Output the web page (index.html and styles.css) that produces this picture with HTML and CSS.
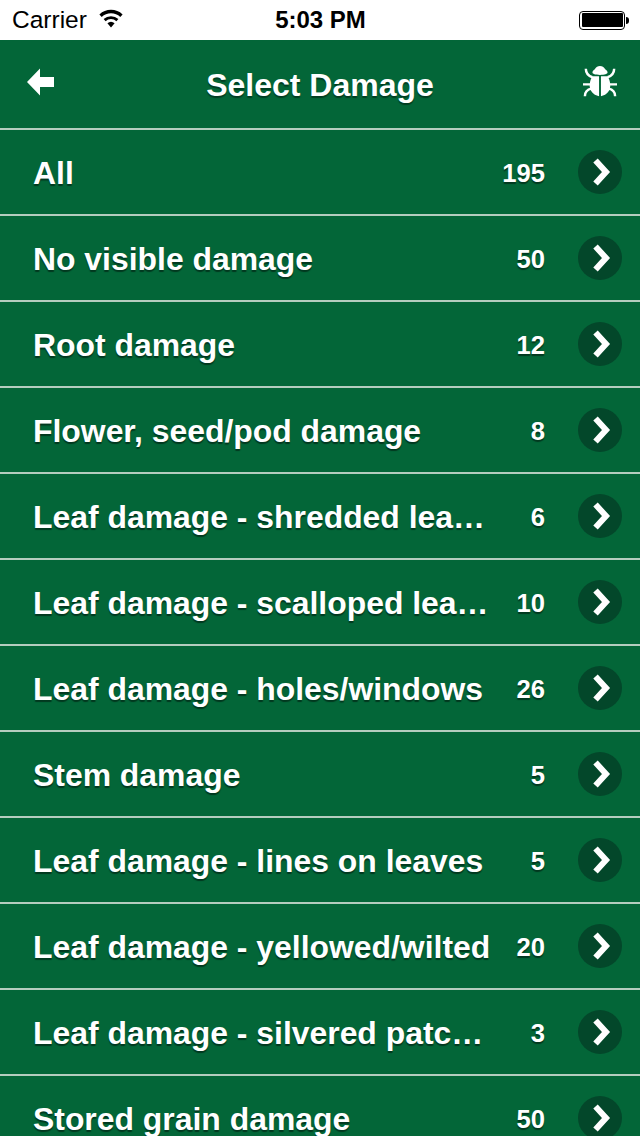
FILE: index.html
```html
<!DOCTYPE html>
<html lang="en">
<head>
<meta charset="utf-8">
<title>Select Damage</title>
<link rel="stylesheet" href="styles.css">
</head>
<body>
<div class="screen">
  <header class="status">
    <div class="status-left">
      <span>Carrier</span>
      <svg class="wifi" width="26" height="20" viewBox="0 0 26 20"><path d="M13 18.500l-3.600-4.200a5.400 5.400 0 0 1 7.200 0zM7.600 12.200L5.600 10a11 11 0 0 1 14.800 0l-2 2.200a8 8 0 0 0-10.800 0zM3.700 7.900L1.400 5.400a17 17 0 0 1 23.200 0l-2.300 2.500a13.800 13.800 0 0 0-18.600 0z" fill="#000"/></svg>
    </div>
    <div class="status-time">5:03 PM</div>
    <div class="status-right">
      <div class="battery"><div class="battery-fill"></div></div>
      <div class="battery-tip"></div>
    </div>
  </header>
  <nav class="navbar">
    <svg class="back" width="30" height="28" viewBox="0 0 30 28"><path d="M1 14L14 0.500V9H28V19H14V27.500z" fill="#fff"/></svg>
    <h1 class="title">Select Damage</h1>
    <svg class="bug" width="36" height="34" viewBox="0 0 38 36" fill="none"><path d="M19 1c2.500 0 4 1 5.500 3.500 1.500.8 2.500 2 2.500 3.500 0 1.300-3 2.500-8 2.500s-8-1.200-8-2.500c0-1.500 1-2.700 2.500-3.500C15 2 16.500 1 19 1z" fill="#fff"/><path d="M11 12h7v21c-4-.5-8-3-9.500-8-.8-3-.5-8.500 2.500-13zM27 12h-7v21c4-.5 8-3 9.500-8 .8-3 .5-8.500-2.500-13z" fill="#fff"/><path d="M4 4c0 5 2.500 7.500 7 9M34 4c0 5-2.500 7.500-7 9M1 20.500h8M37 20.500h-8M3 33c0-4 2-7 7-8M35 33c0-4-2-7-7-8" stroke="#fff" stroke-width="2.600"/></svg>
  </nav>
  <main class="list">
    <div class="row"><span class="label">All</span><span class="count">195</span><span class="go"><svg width="44" height="44" viewBox="0 0 44 44"><path d="M17.500 10.500L28 22 17.500 33.500" fill="none" stroke="#fff" stroke-width="6"/></svg></span></div>
    <div class="row"><span class="label">No visible damage</span><span class="count">50</span><span class="go"><svg width="44" height="44" viewBox="0 0 44 44"><path d="M17.500 10.500L28 22 17.500 33.500" fill="none" stroke="#fff" stroke-width="6"/></svg></span></div>
    <div class="row"><span class="label">Root damage</span><span class="count">12</span><span class="go"><svg width="44" height="44" viewBox="0 0 44 44"><path d="M17.500 10.500L28 22 17.500 33.500" fill="none" stroke="#fff" stroke-width="6"/></svg></span></div>
    <div class="row"><span class="label">Flower, seed/pod damage</span><span class="count">8</span><span class="go"><svg width="44" height="44" viewBox="0 0 44 44"><path d="M17.500 10.500L28 22 17.500 33.500" fill="none" stroke="#fff" stroke-width="6"/></svg></span></div>
    <div class="row"><span class="label">Leaf damage - shredded lea…</span><span class="count">6</span><span class="go"><svg width="44" height="44" viewBox="0 0 44 44"><path d="M17.500 10.500L28 22 17.500 33.500" fill="none" stroke="#fff" stroke-width="6"/></svg></span></div>
    <div class="row"><span class="label">Leaf damage - scalloped lea…</span><span class="count">10</span><span class="go"><svg width="44" height="44" viewBox="0 0 44 44"><path d="M17.500 10.500L28 22 17.500 33.500" fill="none" stroke="#fff" stroke-width="6"/></svg></span></div>
    <div class="row"><span class="label">Leaf damage - holes/windows</span><span class="count">26</span><span class="go"><svg width="44" height="44" viewBox="0 0 44 44"><path d="M17.500 10.500L28 22 17.500 33.500" fill="none" stroke="#fff" stroke-width="6"/></svg></span></div>
    <div class="row"><span class="label">Stem damage</span><span class="count">5</span><span class="go"><svg width="44" height="44" viewBox="0 0 44 44"><path d="M17.500 10.500L28 22 17.500 33.500" fill="none" stroke="#fff" stroke-width="6"/></svg></span></div>
    <div class="row"><span class="label">Leaf damage - lines on leaves</span><span class="count">5</span><span class="go"><svg width="44" height="44" viewBox="0 0 44 44"><path d="M17.500 10.500L28 22 17.500 33.500" fill="none" stroke="#fff" stroke-width="6"/></svg></span></div>
    <div class="row"><span class="label">Leaf damage - yellowed/wilted</span><span class="count">20</span><span class="go"><svg width="44" height="44" viewBox="0 0 44 44"><path d="M17.500 10.500L28 22 17.500 33.500" fill="none" stroke="#fff" stroke-width="6"/></svg></span></div>
    <div class="row"><span class="label">Leaf damage - silvered patc…</span><span class="count">3</span><span class="go"><svg width="44" height="44" viewBox="0 0 44 44"><path d="M17.500 10.500L28 22 17.500 33.500" fill="none" stroke="#fff" stroke-width="6"/></svg></span></div>
    <div class="row"><span class="label">Stored grain damage</span><span class="count">50</span><span class="go"><svg width="44" height="44" viewBox="0 0 44 44"><path d="M17.500 10.500L28 22 17.500 33.500" fill="none" stroke="#fff" stroke-width="6"/></svg></span></div>
  </main>
</div>
</body>
</html>
```
FILE: styles.css
```css
* { box-sizing: border-box; }
html, body { margin: 0; padding: 0; }
body { font-family: "Liberation Sans", Arial, sans-serif; background: #036638; }
.screen { width: 640px; height: 1136px; overflow: hidden; display: flex; flex-direction: column; }
.status { height: 40px; flex: none; background: #fff; color: #000; display: grid; grid-template-columns: 1fr auto 1fr; align-items: center; padding: 0 11px 0 12px; font-size: 24.500px; }
.status-left { display: flex; align-items: center; gap: 11px; }
.wifi { margin-top: -2px; }
.status-time { font-weight: 700; font-size: 24px; }
.status-right { display: flex; align-items: center; justify-content: flex-end; }
.battery { width: 46px; height: 19px; border: 1.5px solid #000; border-radius: 4px; padding: 1.5px; flex: none; }
.battery-fill { height: 100%; background: #000; border-radius: 1px; }
.battery-tip { width: 3px; height: 7px; background: #000; border-radius: 0 3px 3px 0; margin-left: 1px; flex: none; }
.navbar { height: 90px; flex: none; border-bottom: 2px solid #b5cdbf; display: flex; align-items: center; justify-content: space-between; padding: 4px 22px 0 26px; }
.title { margin: 0 0 2px 2px; font-size: 32px; font-weight: 700; color: #fff; text-shadow: 0 2px 1px rgba(0,0,0,.4); }
.back { margin-top: -8px; }
.bug { margin-top: -8px; }
.list { display: flex; flex-direction: column; }
.row { height: 86px; flex: none; border-bottom: 2px solid #b5cdbf; display: flex; align-items: center; padding: 0 18px 0 33px; }
.label { flex: 1; min-width: 0; padding-top: 2px; font-size: 31.900px; font-weight: 700; color: #fff; white-space: nowrap; text-shadow: 0 2px 1px rgba(0,0,0,.45); }
.count { width: 50px; flex: none; padding-top: 2px; text-align: right; font-size: 25.600px; font-weight: 700; color: #fff; text-shadow: 0 2px 1px rgba(0,0,0,.45); margin-right: 33px; }
.go { width: 44px; height: 44px; flex: none; border-radius: 50%; background: #03472a; display: flex; }
```
